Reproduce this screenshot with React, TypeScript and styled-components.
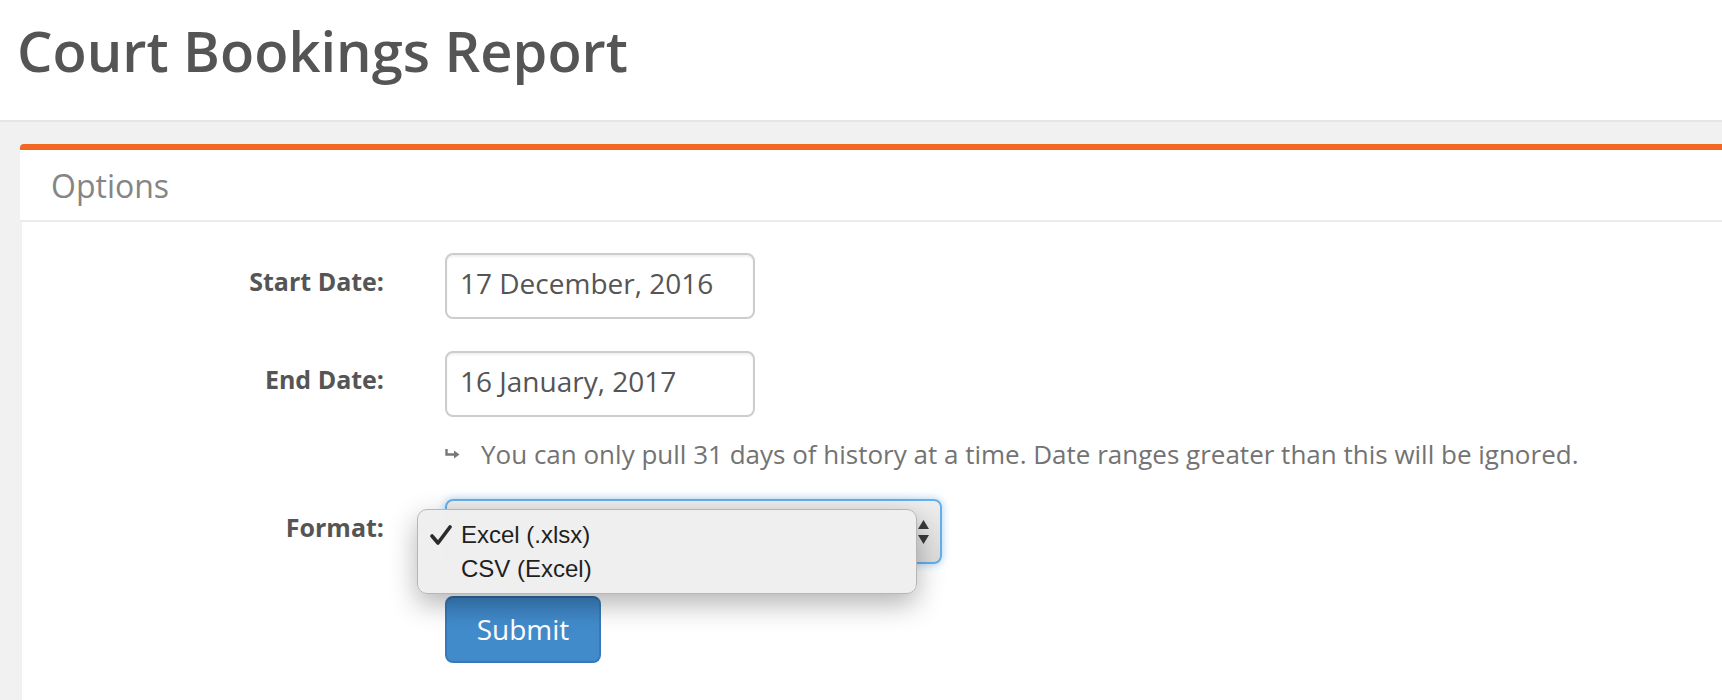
import React from "react";
import styled, { createGlobalStyle } from "styled-components";

const GlobalStyle = createGlobalStyle`
  html, body { margin: 0; padding: 0; }
  body {
    background: #f1f1f1;
    font-family: "Open Sans", "Noto Sans", sans-serif;
    color: #555;
    overflow: hidden;
  }
  * { box-sizing: border-box; }
`;

const TopBar = styled.header`
  background: #fff;
  height: 122px;
  border-bottom: 2px solid #e6e6e6;
  padding: 20px 0 0 17px;
`;

const Title = styled.h1`
  margin: 0;
  font-size: 56px;
  line-height: 61.6px;
  font-weight: 600;
  color: #555;
`;

const Main = styled.main`
  padding: 22px 0 0 20px;
`;

const Panel = styled.section`
  border-top: 6px solid #f26722;
  border-top-left-radius: 4px;
`;

const PanelHeading = styled.div`
  height: 72px;
  background: #fff;
  border-bottom: 2px solid #ebebeb;
  padding: 0 31px;
  display: flex;
  align-items: center;
  font-size: 32px;
  color: #858585;
`;

const PanelBody = styled.div`
  margin-left: 2px;
  background: #fff;
  padding: 31px 0 80px;
`;

const FormRow = styled.div<{ $gap?: number }>`
  display: grid;
  grid-template-columns: 362px 1fr;
  column-gap: 61px;
  margin-top: ${(p) => p.$gap ?? 0}px;
`;

const Label = styled.label`
  text-align: right;
  font-size: 25px;
  font-weight: 700;
  line-height: 37px;
  padding-top: 10px;
  color: #555;
`;

const DateInput = styled.input`
  width: 310px;
  height: 66px;
  border: 2px solid #cdcdcd;
  border-radius: 8px;
  padding: 0 13px 6px;
  font-family: "Open Sans", sans-serif;
  font-size: 28px;
  color: #555;
  background: #fff;
  box-shadow: inset 0 2px 2px rgba(0, 0, 0, 0.06);
  outline: none;
`;

const HelpText = styled.p`
  margin: 0;
  display: flex;
  align-items: center;
  gap: 21px;
  font-size: 26px;
  line-height: 36px;
  color: #737373;
`;

const SelectWrap = styled.div`
  position: relative;
  width: 497px;
`;

const SelectBox = styled.div`
  height: 65px;
  border: 2px solid #66afe9;
  border-radius: 8px;
  background: linear-gradient(#eeeeee, #dcdcdc);
  box-shadow: 0 0 8px rgba(102, 175, 233, 0.6);
  display: flex;
  align-items: center;
  justify-content: flex-end;
  padding: 0 11px 0 13px;
`;

const Popup = styled.ul`
  position: absolute;
  left: -28px;
  top: 10px;
  width: 500px;
  margin: 0;
  list-style: none;
  background: rgba(239, 239, 239, 0.99);
  border: 1px solid #b6b6b6;
  border-radius: 10px;
  box-shadow: 0 10px 28px rgba(0, 0, 0, 0.3);
  padding: 8px 0 7px;
  font-family: "Liberation Sans", Arial, sans-serif;
  font-size: 24px;
  color: #1f1f1f;
`;

const OptionItem = styled.li`
  display: flex;
  align-items: center;
  height: 34px;
  line-height: 34px;
  padding-left: 12px;
`;

const CheckSlot = styled.span`
  width: 31px;
  display: flex;
  align-items: center;
`;

const SubmitButton = styled.button`
  width: 156px;
  height: 67px;
  border: 2px solid #3779b8;
  border-top-color: #2f6ba5;
  border-radius: 8px;
  background: linear-gradient(#3d85c6, #428bcb 40%);
  color: #fff;
  font-family: "Open Sans", sans-serif;
  font-size: 28px;
  padding: 0 0 2px;
  cursor: pointer;
`;

const Spacer = styled.div``;

const HookArrow = () => (
  <svg width="15" height="11" viewBox="0 0 15 11" aria-hidden="true">
    <path d="M1.5 0 V5.5 H10" fill="none" stroke="#777" strokeWidth="2.4" />
    <path d="M9 1.5 L14.5 5.5 L9 9.5 Z" fill="#777" />
  </svg>
);

const UpDown = () => (
  <svg width="11" height="30" viewBox="0 0 11 30" aria-hidden="true">
    <path d="M0 12 L5.5 3 L11 12 Z" fill="#3a3a3a" />
    <path d="M0 18 L5.5 27 L11 18 Z" fill="#3a3a3a" />
  </svg>
);

const Check = () => (
  <svg width="22" height="20" viewBox="0 0 22 20" aria-hidden="true">
    <path
      d="M2 11 L8 18 L20 2"
      fill="none"
      stroke="#2b2b2b"
      strokeWidth="3.6"
      strokeLinecap="round"
      strokeLinejoin="round"
    />
  </svg>
);

export default function App() {
  return (
    <>
      <GlobalStyle />
      <TopBar>
        <Title>Court Bookings Report</Title>
      </TopBar>
      <Main>
        <Panel>
          <PanelHeading>Options</PanelHeading>
          <PanelBody>
            <FormRow>
              <Label>Start Date:</Label>
              <div>
                <DateInput readOnly defaultValue="17 December, 2016" />
              </div>
            </FormRow>
            <FormRow $gap={32}>
              <Label>End Date:</Label>
              <div>
                <DateInput readOnly defaultValue="16 January, 2017" />
              </div>
            </FormRow>
            <FormRow $gap={19}>
              <Spacer />
              <HelpText>
                <HookArrow />
                You can only pull 31 days of history at a time. Date ranges greater than this will be ignored.
              </HelpText>
            </FormRow>
            <FormRow $gap={27}>
              <Label>Format:</Label>
              <SelectWrap>
                <SelectBox>
                  <UpDown />
                </SelectBox>
                <Popup>
                  <OptionItem>
                    <CheckSlot>
                      <Check />
                    </CheckSlot>
                    Excel (.xlsx)
                  </OptionItem>
                  <OptionItem>
                    <CheckSlot />
                    CSV (Excel)
                  </OptionItem>
                </Popup>
              </SelectWrap>
            </FormRow>
            <FormRow $gap={32}>
              <Spacer />
              <div>
                <SubmitButton>Submit</SubmitButton>
              </div>
            </FormRow>
          </PanelBody>
        </Panel>
      </Main>
    </>
  );
}
